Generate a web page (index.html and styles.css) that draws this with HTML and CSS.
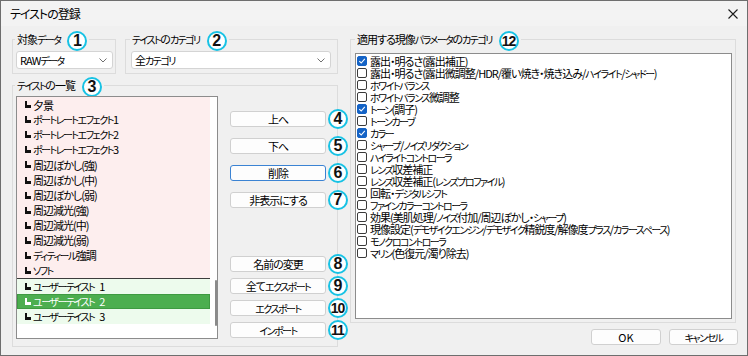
FILE: index.html
```html
<!DOCTYPE html>
<html lang="ja">
<head>
<meta charset="utf-8">
<title>テイストの登録</title>
<link rel="stylesheet" href="styles.css">
</head>
<body>
<div class="window">
  <div class="titlebar">
    <span class="title">テイストの登録</span>
    <svg class="close" width="10" height="10" viewBox="0 0 10 10"><path d="M0.5 0.5L9.5 9.5M9.5 0.5L0.5 9.5" stroke="#1a1a1a" stroke-width="1.1" fill="none"/></svg>
  </div>
  <div class="body">
    <div class="leftcol">
      <div class="toprow">
        <fieldset class="group g-data">
          <legend>対象<span class="k">データ</span><span class="num">1</span></legend>
          <div class="select"><span>RAW<span class="k">データ</span></span><svg class="chev" width="8" height="5" viewBox="0 0 8 5"><path d="M0.5 0.5L4 4L7.5 0.5" stroke="#707070" fill="none"/></svg></div>
        </fieldset>
        <fieldset class="group g-cat">
          <legend><span class="k">テイスト</span>の<span class="k">カテゴリ</span><span class="num">2</span></legend>
          <div class="select"><span>全<span class="k">カテゴリ</span></span><svg class="chev" width="8" height="5" viewBox="0 0 8 5"><path d="M0.5 0.5L4 4L7.5 0.5" stroke="#707070" fill="none"/></svg></div>
        </fieldset>
      </div>
      <fieldset class="group g-list">
        <legend><span class="k">テイスト</span>の一覧<span class="num">3</span></legend>
        <div class="listwrap">
          <div class="tastelist">
            <div class="items">
              <div class="preset">
                <div class="item"><svg class="bl" width="6" height="7" viewBox="0 0 6 7"><path d="M0 0H2V4H6V7H0Z"/></svg><span class="txt">夕景</span></div>
                <div class="item"><svg class="bl" width="6" height="7" viewBox="0 0 6 7"><path d="M0 0H2V4H6V7H0Z"/></svg><span class="txt"><span class="k">ポートレートエフェクト</span>1</span></div>
                <div class="item"><svg class="bl" width="6" height="7" viewBox="0 0 6 7"><path d="M0 0H2V4H6V7H0Z"/></svg><span class="txt"><span class="k">ポートレートエフェクト</span>2</span></div>
                <div class="item"><svg class="bl" width="6" height="7" viewBox="0 0 6 7"><path d="M0 0H2V4H6V7H0Z"/></svg><span class="txt"><span class="k">ポートレートエフェクト</span>3</span></div>
                <div class="item"><svg class="bl" width="6" height="7" viewBox="0 0 6 7"><path d="M0 0H2V4H6V7H0Z"/></svg><span class="txt">周辺ぼかし(強)</span></div>
                <div class="item"><svg class="bl" width="6" height="7" viewBox="0 0 6 7"><path d="M0 0H2V4H6V7H0Z"/></svg><span class="txt">周辺ぼかし(中)</span></div>
                <div class="item"><svg class="bl" width="6" height="7" viewBox="0 0 6 7"><path d="M0 0H2V4H6V7H0Z"/></svg><span class="txt">周辺ぼかし(弱)</span></div>
                <div class="item"><svg class="bl" width="6" height="7" viewBox="0 0 6 7"><path d="M0 0H2V4H6V7H0Z"/></svg><span class="txt">周辺減光(強)</span></div>
                <div class="item"><svg class="bl" width="6" height="7" viewBox="0 0 6 7"><path d="M0 0H2V4H6V7H0Z"/></svg><span class="txt">周辺減光(中)</span></div>
                <div class="item"><svg class="bl" width="6" height="7" viewBox="0 0 6 7"><path d="M0 0H2V4H6V7H0Z"/></svg><span class="txt">周辺減光(弱)</span></div>
                <div class="item"><svg class="bl" width="6" height="7" viewBox="0 0 6 7"><path d="M0 0H2V4H6V7H0Z"/></svg><span class="txt"><span class="k">ディティール</span>強調</span></div>
                <div class="item"><svg class="bl" width="6" height="7" viewBox="0 0 6 7"><path d="M0 0H2V4H6V7H0Z"/></svg><span class="txt"><span class="k">ソフト</span></span></div>
              </div>
              <div class="user">
                <div class="item"><svg class="bl" width="6" height="7" viewBox="0 0 6 7"><path d="M0 0H2V4H6V7H0Z"/></svg><span class="txt"><span class="k">ユーザーテイスト</span><span class="n">1</span></span></div>
                <div class="item sel"><svg class="bl" width="6" height="7" viewBox="0 0 6 7"><path d="M0 0H2V4H6V7H0Z"/></svg><span class="txt"><span class="k">ユーザーテイスト</span><span class="n">2</span></span></div>
                <div class="item"><svg class="bl" width="6" height="7" viewBox="0 0 6 7"><path d="M0 0H2V4H6V7H0Z"/></svg><span class="txt"><span class="k">ユーザーテイスト</span><span class="n">3</span></span></div>
              </div>
            </div>
            <div class="scroll"><div class="thumb"></div></div>
          </div>
          <div class="btncol">
            <div class="btngroup top">
              <div class="btnrow"><button class="btn">上へ</button><span class="num side">4</span></div>
              <div class="btnrow"><button class="btn">下へ</button><span class="num side">5</span></div>
              <div class="btnrow"><button class="btn focus">削除</button><span class="num side">6</span></div>
              <div class="btnrow"><button class="btn">非表示にする</button><span class="num side">7</span></div>
            </div>
            <div class="btngroup bottom">
              <div class="btnrow"><button class="btn">名前の変更</button><span class="num side">8</span></div>
              <div class="btnrow"><button class="btn">全て<span class="k">エクスポート</span></button><span class="num side">9</span></div>
              <div class="btnrow"><button class="btn"><span class="k">エクスポート</span></button><span class="num side two">10</span></div>
              <div class="btnrow"><button class="btn"><span class="k">インポート</span></button><span class="num side two">11</span></div>
            </div>
          </div>
        </div>
      </fieldset>
    </div>
    <div class="rightcol">
      <fieldset class="group g-params">
        <legend>適用する現像<span class="k">パラメータ</span>の<span class="k">カテゴリ</span><span class="num two">12</span></legend>
        <div class="paramlist">
          <div class="prow"><span class="cb on"><svg width="8" height="8" viewBox="0 0 8 8"><path d="M1.3 4.2L3.2 6L6.8 1.9" stroke="#fff" stroke-width="1.1" fill="none"/></svg></span><span class="txt">露出・明るさ(露出補正)</span></div>
          <div class="prow"><span class="cb"></span><span class="txt">露出・明るさ(露出微調整/HDR/覆い焼き・焼き込み/<span class="k">ハイライト</span>/<span class="k">シャドー</span>)</span></div>
          <div class="prow"><span class="cb"></span><span class="txt"><span class="k">ホワイトバランス</span></span></div>
          <div class="prow"><span class="cb"></span><span class="txt"><span class="k">ホワイトバランス</span>微調整</span></div>
          <div class="prow"><span class="cb on"><svg width="8" height="8" viewBox="0 0 8 8"><path d="M1.3 4.2L3.2 6L6.8 1.9" stroke="#fff" stroke-width="1.1" fill="none"/></svg></span><span class="txt"><span class="k">トーン</span>(調子)</span></div>
          <div class="prow"><span class="cb"></span><span class="txt"><span class="k">トーンカーブ</span></span></div>
          <div class="prow"><span class="cb on"><svg width="8" height="8" viewBox="0 0 8 8"><path d="M1.3 4.2L3.2 6L6.8 1.9" stroke="#fff" stroke-width="1.1" fill="none"/></svg></span><span class="txt"><span class="k">カラー</span></span></div>
          <div class="prow"><span class="cb"></span><span class="txt"><span class="k">シャープ</span>/<span class="k">ノイズリダクション</span></span></div>
          <div class="prow"><span class="cb"></span><span class="txt"><span class="k">ハイライトコントローラ</span></span></div>
          <div class="prow"><span class="cb"></span><span class="txt"><span class="k">レンズ</span>収差補正</span></div>
          <div class="prow"><span class="cb"></span><span class="txt"><span class="k">レンズ</span>収差補正(<span class="k">レンズプロファイル</span>)</span></div>
          <div class="prow"><span class="cb"></span><span class="txt">回転・<span class="k">デジタルシフト</span></span></div>
          <div class="prow"><span class="cb"></span><span class="txt"><span class="k">ファインカラーコントローラ</span></span></div>
          <div class="prow"><span class="cb"></span><span class="txt">効果(美肌処理/<span class="k">ノイズ</span>付加/周辺ぼかし・<span class="k">シャープ</span>)</span></div>
          <div class="prow"><span class="cb"></span><span class="txt">現像設定(<span class="k">デモザイクエンジン</span>/<span class="k">デモザイク</span>精鋭度/解像度<span class="k">プラス</span>/<span class="k">カラースペース</span>)</span></div>
          <div class="prow"><span class="cb"></span><span class="txt"><span class="k">モノクロコントローラ</span></span></div>
          <div class="prow"><span class="cb"></span><span class="txt"><span class="k">マリン</span>(色復元/濁り除去)</span></div>
        </div>
      </fieldset>
      <div class="dlgbtns">
        <button class="btn ok">OK</button>
        <button class="btn cancel"><span class="k">キャンセル</span></button>
      </div>
    </div>
  </div>
</div>
</body>
</html>
```

FILE: styles.css
```css
* { box-sizing: border-box; }
html, body { margin: 0; padding: 0; }
body {
  font-family: "Noto Sans CJK JP", "Noto Sans", sans-serif;
  font-size: 11px;
  letter-spacing: -1px;
  color: #000;
  background: #fff;
  font-feature-settings: "palt";
}
.k { font-size: 10px; letter-spacing: -1.5px; }
.n { margin-left: 5px; }
.window {
  width: 748px;
  height: 356px;
  border: 1px solid #6e6e6e;
  background: #f0f0f0;
  display: flex;
  flex-direction: column;
}
.titlebar {
  flex: none;
  height: 25px;
  background: #f3f3f3;
  display: flex;
  align-items: center;
  justify-content: space-between;
  padding: 0 9px 0 9px;
  font-size: 12px;
}
.close { display: block; }
.body {
  flex: 1;
  display: flex;
  gap: 12px;
  padding: 5px 9px 0 11px;
}
.leftcol {
  width: 326px;
  flex: none;
  display: flex;
  flex-direction: column;
}
.toprow { display: flex; gap: 9px; }
fieldset.group {
  margin: 0;
  border: 1px solid #dcdcdc;
  min-width: 0;
}
legend {
  font-size: 11px;
  line-height: 16px;
  height: 16px;
  padding: 0 2px;
  margin-left: -1px;
  white-space: nowrap;
}
.num {
  display: inline-block;
  width: 20px;
  height: 20px;
  border: 2px solid #17c2e4;
  border-radius: 50%;
  background: #fff;
  color: #111;
  font: bold 16px/16px "Liberation Sans", Arial, sans-serif;
  letter-spacing: 0;
  text-align: center;
  vertical-align: middle;
  margin: -4px 0 -4px 7px;
}
.num.two { font-size: 14px; letter-spacing: -1px; text-indent: -1px; }
fieldset.g-data { width: 104px; padding: 4px 2px 4px 3px; }
fieldset.g-cat { width: 213px; padding: 4px 6px 4px 5px; }
.select {
  height: 18px;
  background: #fff;
  border: 1px solid #d4d4d4;
  border-radius: 3px;
  display: flex;
  align-items: center;
  justify-content: space-between;
  padding: 0 5px 0 3px;
  font-size: 11px;
}
.chev { display: block; }
fieldset.g-list { margin-top: 3px; padding: 3px 0 7px 3px; }
.listwrap { display: flex; gap: 12px; }
.tastelist {
  width: 206px;
  height: 243px;
  border: 1px solid #8c8c8c;
  background: #fff;
  display: flex;
}
.items { width: 193px; }
.preset { background: #fdeeee; border-bottom: 1px solid #3c3c3c; }
.user { background: #edfbed; }
.item {
  height: 15.1px;
  display: flex;
  align-items: center;
  gap: 2px;
  padding-left: 8px;
  white-space: nowrap;
}
.txt { display: block; line-height: 12px; }
.bl { display: block; fill: #111; flex: none; }
.item.sel { background: #4cae4f; color: #fff; box-shadow: inset 0 0 0 1px #3e9a41; }
.item.sel .bl { fill: #fff; }
.scroll { flex: 1; padding: 183px 0 0 5px; }
.thumb { width: 2px; height: 46px; background: #8a8a8a; border-radius: 1px; }
.btncol {
  height: 243px;
  display: flex;
  flex-direction: column;
  justify-content: space-between;
  padding: 15px 0 1px 0;
}
.btngroup { display: flex; flex-direction: column; }
.btngroup.top { gap: 11px; }
.btngroup.bottom { gap: 6px; }
.btnrow { display: flex; align-items: center; }
.btn {
  width: 96px;
  height: 16px;
  padding: 0;
  margin: 0;
  background: #fdfdfd;
  border: 1px solid #d0d0d0;
  border-radius: 3px;
  font-family: "Noto Sans CJK JP", "Noto Sans", sans-serif;
  font-feature-settings: "palt";
  font-size: 11px;
  letter-spacing: -1px;
  line-height: 14px;
  color: #000;
}
.btn.focus { border-color: #3b83d3; }
.num.side { margin: -2px 0 -2px 2px; }
.rightcol { flex: 1; display: flex; flex-direction: column; }
fieldset.g-params { margin-right: 2px; padding: 6px 3px 3px 4px; }
fieldset.g-params legend { margin-left: 0; }
.paramlist {
  height: 266px;
  border: 1px solid #8c8c8c;
  background: #fff;
  padding: 1px 0 0 1px;
}
.prow {
  height: 12px;
  display: flex;
  align-items: center;
  gap: 3px;
  white-space: nowrap;
}
.cb {
  flex: none;
  width: 10px;
  height: 10px;
  border: 1px solid #3a3a3a;
  border-radius: 2px;
  background: #fff;
  display: flex;
  align-items: center;
  justify-content: center;
}
.cb.on { background: #1463c6; border-color: #1463c6; }
.cb svg { display: block; }
.dlgbtns { display: flex; justify-content: flex-end; gap: 8px; margin-top: 6px; }
.btn.ok { width: 70px; letter-spacing: 0; }
.btn.cancel { width: 69px; }
```
